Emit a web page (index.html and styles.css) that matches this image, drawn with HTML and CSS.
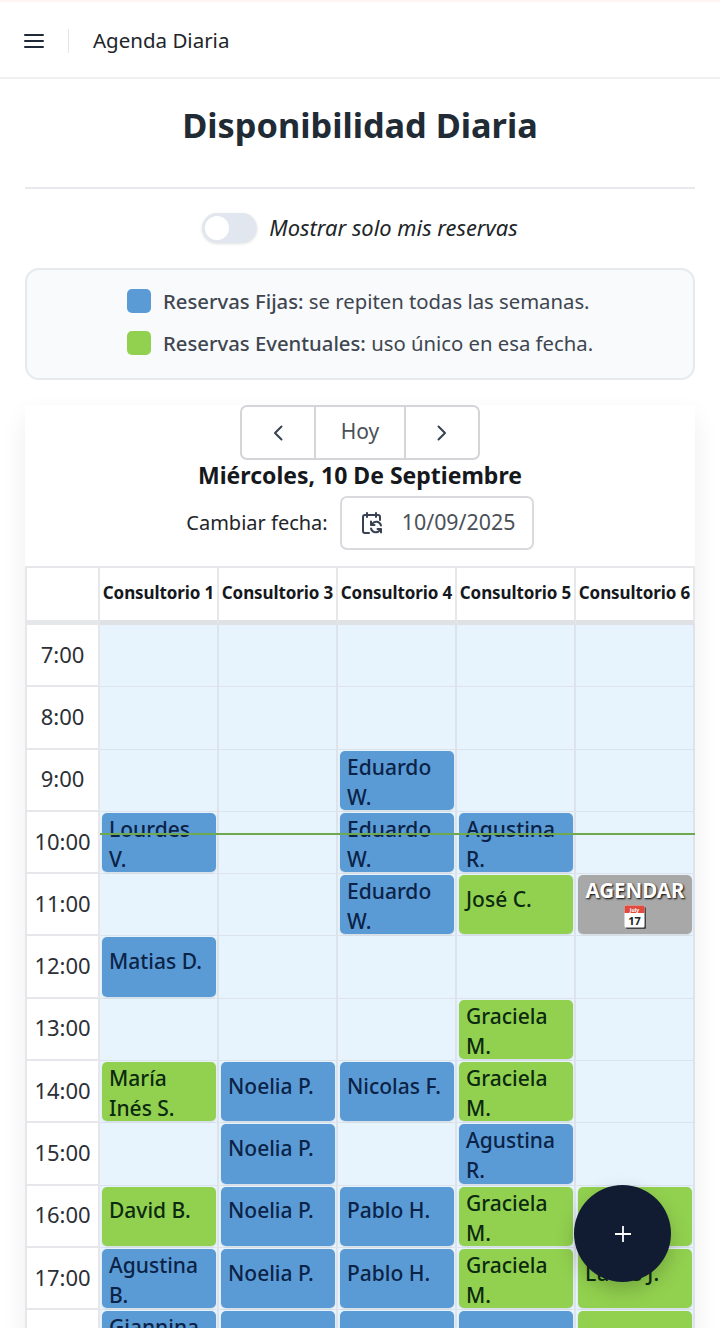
FILE: index.html
```html
<!DOCTYPE html>
<html lang="es">
<head>
  <meta charset="UTF-8">
  <title>Agenda Diaria</title>
  <link rel="stylesheet" href="styles.css">
</head>
<body>

  <header class="topbar">
    <button class="menu-btn" aria-label="Menu">
      <svg width="20" height="16" viewBox="0 0 20 16"><path d="M1 2h18M1 8h18M1 14h18" stroke="#1f2937" stroke-width="2" stroke-linecap="round"/></svg>
    </button>
    <span class="topbar-sep"></span>
    <span class="topbar-title">Agenda Diaria</span>
  </header>

  <main class="page">
    <h1>Disponibilidad Diaria</h1>
    <hr class="divider">

    <div class="switch-row">
      <span class="switch"><span class="knob"></span></span>
      <em>Mostrar solo mis reservas</em>
    </div>

    <section class="legend">
      <div class="legend-row"><span class="swatch blue"></span><span><span class="legend-name">Reservas Fijas:</span> se repiten todas las semanas.</span></div>
      <div class="legend-row"><span class="swatch green"></span><span><span class="legend-name">Reservas Eventuales:</span> uso único en esa fecha.</span></div>
    </section>

    <section class="calendar">
      <div class="btn-group">
        <button aria-label="Anterior">
          <svg width="12" height="18" viewBox="0 0 12 18"><path d="M9.5 2.5 3 9l6.5 6.5" fill="none" stroke="#374151" stroke-width="2" stroke-linecap="round" stroke-linejoin="round"/></svg>
        </button>
        <button class="today">Hoy</button>
        <button aria-label="Siguiente">
          <svg width="12" height="18" viewBox="0 0 12 18"><path d="M2.5 2.5 9 9l-6.5 6.5" fill="none" stroke="#374151" stroke-width="2" stroke-linecap="round" stroke-linejoin="round"/></svg>
        </button>
      </div>
      <div class="date-title">Miércoles, 10 De Septiembre</div>
      <div class="date-row">
        <label>Cambiar fecha:</label>
        <div class="date-input">
          <svg width="24" height="24" viewBox="0 0 24 24" fill="none" stroke="#374151" stroke-width="2" stroke-linecap="round" stroke-linejoin="round">
            <path d="M9 22H5a2 2 0 0 1-2-2V6a2 2 0 0 1 2-2h13a2 2 0 0 1 2 2v3M7 2v4M16 2v4"/>
            <path d="M21 14.5a5 5 0 0 0-9-1.5l-1 1V10.500M11 17.500a5 5 0 0 0 9 1.500l1-1v3.500M11 14h3.500M21 18h-3.500"/>
          </svg>
          <span>10/09/2025</span>
        </div>
      </div>

      <div class="grid">
        <div class="head corner"></div>
        <div class="head">Consultorio 1</div>
        <div class="head">Consultorio 3</div>
        <div class="head">Consultorio 4</div>
        <div class="head">Consultorio 5</div>
        <div class="head">Consultorio 6</div>

        <div class="time">7:00</div><div class="slot"></div><div class="slot"></div><div class="slot"></div><div class="slot"></div><div class="slot"></div>
        <div class="time">8:00</div><div class="slot"></div><div class="slot"></div><div class="slot"></div><div class="slot"></div><div class="slot"></div>

        <div class="time">9:00</div><div class="slot"></div><div class="slot"></div>
        <div class="slot"><div class="event fija">Eduardo W.</div></div>
        <div class="slot"></div><div class="slot"></div>

        <div class="time">10:00</div>
        <div class="slot"><div class="event fija">Lourdes V.</div></div>
        <div class="slot"></div>
        <div class="slot"><div class="event fija">Eduardo W.</div></div>
        <div class="slot"><div class="event fija">Agustina R.</div></div>
        <div class="slot"></div>

        <div class="time">11:00</div><div class="slot"></div><div class="slot"></div>
        <div class="slot"><div class="event fija">Eduardo W.</div></div>
        <div class="slot"><div class="event eventual">José C.</div></div>
        <div class="slot">
          <div class="event agendar">
            <span>AGENDAR</span>
            <svg width="24" height="26" viewBox="0 0 24 26">
              <rect x="3" y="3" width="20" height="22" rx="1.500" fill="#444"/>
              <rect x="1.500" y="1.500" width="20" height="22" rx="1.500" fill="#fff"/>
              <path d="M1.500 3a1.500 1.500 0 0 1 1.500-1.500h17a1.500 1.500 0 0 1 1.500 1.500v6h-20z" fill="#e04a3f"/>
              <text x="11.500" y="7.500" text-anchor="middle" class="cal-month">July</text>
              <text x="11.500" y="20.500" text-anchor="middle" class="cal-day">17</text>
            </svg>
          </div>
        </div>

        <div class="time">12:00</div>
        <div class="slot"><div class="event fija">Matias D.</div></div>
        <div class="slot"></div><div class="slot"></div><div class="slot"></div><div class="slot"></div>

        <div class="time">13:00</div><div class="slot"></div><div class="slot"></div><div class="slot"></div>
        <div class="slot"><div class="event eventual">Graciela M.</div></div>
        <div class="slot"></div>

        <div class="time">14:00</div>
        <div class="slot"><div class="event eventual">María Inés S.</div></div>
        <div class="slot"><div class="event fija">Noelia P.</div></div>
        <div class="slot"><div class="event fija">Nicolas F.</div></div>
        <div class="slot"><div class="event eventual">Graciela M.</div></div>
        <div class="slot"></div>

        <div class="time">15:00</div><div class="slot"></div>
        <div class="slot"><div class="event fija">Noelia P.</div></div>
        <div class="slot"></div>
        <div class="slot"><div class="event fija">Agustina R.</div></div>
        <div class="slot"></div>

        <div class="time">16:00</div>
        <div class="slot"><div class="event eventual">David B.</div></div>
        <div class="slot"><div class="event fija">Noelia P.</div></div>
        <div class="slot"><div class="event fija">Pablo H.</div></div>
        <div class="slot"><div class="event eventual">Graciela M.</div></div>
        <div class="slot"><div class="event eventual">Lucas J.</div></div>

        <div class="time">17:00</div>
        <div class="slot"><div class="event fija">Agustina B.</div></div>
        <div class="slot"><div class="event fija">Noelia P.</div></div>
        <div class="slot"><div class="event fija">Pablo H.</div></div>
        <div class="slot"><div class="event eventual">Graciela M.</div></div>
        <div class="slot"><div class="event eventual">Lucas J.</div></div>

        <div class="time">18:00</div>
        <div class="slot"><div class="event fija">Giannina B.</div></div>
        <div class="slot"><div class="event fija">Noelia P.</div></div>
        <div class="slot"><div class="event fija">Pablo H.</div></div>
        <div class="slot"><div class="event fija">Gastón T.</div></div>
        <div class="slot"><div class="event eventual">Ludmila</div></div>

        <div class="now-line"></div>
      </div>
    </section>
  </main>

  <button class="fab" aria-label="Agregar">
    <svg width="18" height="18" viewBox="0 0 18 18"><path d="M9 1v16M1 9h16" stroke="#fff" stroke-width="1.800"/></svg>
  </button>

</body>
</html>
```

FILE: styles.css
```css
* {
  box-sizing: border-box;
}

html, body {
  height: 1328px;
  overflow: hidden;
}

body {
  margin: 0;
  font-family: "Noto Sans", "Open Sans", sans-serif;
  color: #212529;
  background: #fff;
}

button {
  font-family: inherit;
  background: none;
  border: 0;
  padding: 0;
}

.topbar {
  height: 79px;
  display: flex;
  align-items: center;
  padding: 2px 24px 0;
  border-top: 2px solid #fff6f4;
  border-bottom: 2px solid #eff0f2;
}

.menu-btn {
  display: flex;
  width: 20px;
}

.topbar-sep {
  width: 1px;
  height: 24px;
  margin: 0 24px 0 24px;
  background: #e3e5e8;
}

.topbar-title {
  margin-bottom: 2px;
  font-size: 20.500px;
  color: #212529;
}

.page {
  padding: 0 25px;
}

h1 {
  margin: 0;
  padding-top: 23px;
  height: 108px;
  font-size: 34.300px;
  line-height: 46px;
  font-weight: 700;
  text-align: center;
  color: #212b36;
}

.divider {
  margin: 0;
  border: 0;
  border-top: 2px solid #e7e9ec;
}

.switch-row {
  display: flex;
  justify-content: center;
  align-items: center;
  gap: 12px;
  margin-top: 23px;
  height: 32px;
  font-size: 21.900px;
}

.switch-row em {
  margin-bottom: 2px;
}

.switch {
  display: block;
  width: 55px;
  height: 30px;
  padding: 3px;
  border-radius: 15px;
  background: #e2e6ee;
  box-shadow: 0 1px 3px rgba(0, 0, 0, .12);
}

.knob {
  display: block;
  width: 24px;
  height: 24px;
  border-radius: 50%;
  background: #fff;
}

.legend {
  margin-top: 24px;
  height: 112px;
  padding: 19px 0 0;
  display: flex;
  flex-direction: column;
  gap: 18px;
  align-items: center;
  background: #f8fafc;
  border: 2px solid #e6e9ed;
  border-radius: 14px;
  font-size: 20.300px;
  color: #3f4650;
}

.legend-row {
  height: 24px;
  width: 466px;
  display: flex;
  align-items: center;
  gap: 12px;
  line-height: 24px;
  white-space: nowrap;
}

.legend-name {
  font-weight: 500;
}

.swatch {
  flex: none;
  width: 24px;
  height: 24px;
  border-radius: 5px;
}

.swatch.blue {
  background: #5b9bd5;
}

.swatch.green {
  background: #92d14f;
}

.calendar {
  margin-top: 25px;
  display: flex;
  flex-direction: column;
  align-items: center;
  box-shadow: 0 10px 24px rgba(0, 0, 0, .07);
}

.btn-group {
  display: flex;
  width: 240px;
  height: 55px;
  border: 2px solid #d3d5d8;
  border-radius: 7px;
}

.btn-group button {
  width: 73px;
  display: flex;
  align-items: center;
  justify-content: center;
}

.btn-group .today {
  width: 92px;
  padding-bottom: 3px;
  font-size: 21px;
  color: #4a5058;
  border-left: 2px solid #d3d5d8;
  border-right: 2px solid #d3d5d8;
}

.date-title {
  height: 36px;
  line-height: 30px;
  font-size: 23px;
  font-weight: 700;
  color: #15181c;
}

.date-row {
  display: flex;
  align-items: center;
  gap: 12px;
  height: 54px;
  font-size: 20px;
}

.date-row label {
  margin-bottom: 1px;
}

.date-input {
  width: 194px;
  height: 54px;
  display: flex;
  align-items: center;
  gap: 18px;
  padding-left: 18px;
  border: 2px solid #d8dadd;
  border-radius: 7px;
  font-size: 21.400px;
  color: #4a5058;
}

.date-input span {
  margin-bottom: 3px;
}

.grid {
  position: relative;
  align-self: stretch;
  margin-top: 16px;
  display: grid;
  grid-template-columns: 73px repeat(5, 119px);
  grid-template-rows: 57px repeat(11, 62.300px);
  border-top: 2px solid #e5e7ea;
  border-left: 2px solid #e5e7ea;
}

.head {
  display: flex;
  align-items: center;
  justify-content: center;
  padding-bottom: 4px;
  white-space: nowrap;
  font-size: 17px;
  font-weight: 700;
  letter-spacing: -.1px;
  color: #15181c;
  background: #fff;
  border-right: 2px solid #e5e7ea;
  border-bottom: 5px solid #dfe1e4;
}

.head.corner {
  border-bottom-color: #e5e7ea;
}

.time {
  display: flex;
  align-items: center;
  justify-content: center;
  padding-bottom: 3px;
  font-size: 22px;
  color: #2b3036;
  background: #fff;
  border-right: 2px solid #e5e7ea;
  border-bottom: 2px solid #e5e7ea;
}

.slot {
  padding: 1px 1px 1px 2px;
  background: #e8f4fd;
  border-right: 2px solid #dde3ea;
  border-bottom: 1px solid #dde3ea;
}

.event {
  height: 100%;
  padding: 1px 7px 13px;
  display: flex;
  align-items: safe center;
  border-radius: 5px;
  font-size: 21px;
  font-weight: 500;
  line-height: 30px;
  overflow: hidden;
  box-shadow: 0 1px 2px rgba(0, 0, 0, .1);
}

.event.fija {
  background: #5b9bd5;
  color: #0b2347;
}

.event.eventual {
  background: #92d14f;
  color: #0c2a10;
}

.event.agendar {
  flex-direction: column;
  align-items: center;
  padding: 1px 0 0;
  background: #a8a8a8;
  color: #fff;
  font-size: 20.500px;
  font-weight: 700;
  line-height: 28px;
  text-shadow: 1px 1px 2px #000;
}

.cal-month {
  font-size: 5px;
  fill: #fff;
  text-shadow: none;
}

.cal-day {
  font-size: 11px;
  font-weight: 700;
  fill: #222;
  text-shadow: none;
}

.now-line {
  position: absolute;
  left: 73px;
  right: 0;
  top: 265px;
  height: 2px;
  background: #6ea84f;
}

.fab {
  position: fixed;
  left: 574px;
  top: 1185px;
  width: 97px;
  height: 97px;
  display: flex;
  align-items: center;
  justify-content: center;
  border-radius: 50%;
  background: #111c33;
  box-shadow: 0 8px 20px rgba(0, 0, 0, .2);
}
```
